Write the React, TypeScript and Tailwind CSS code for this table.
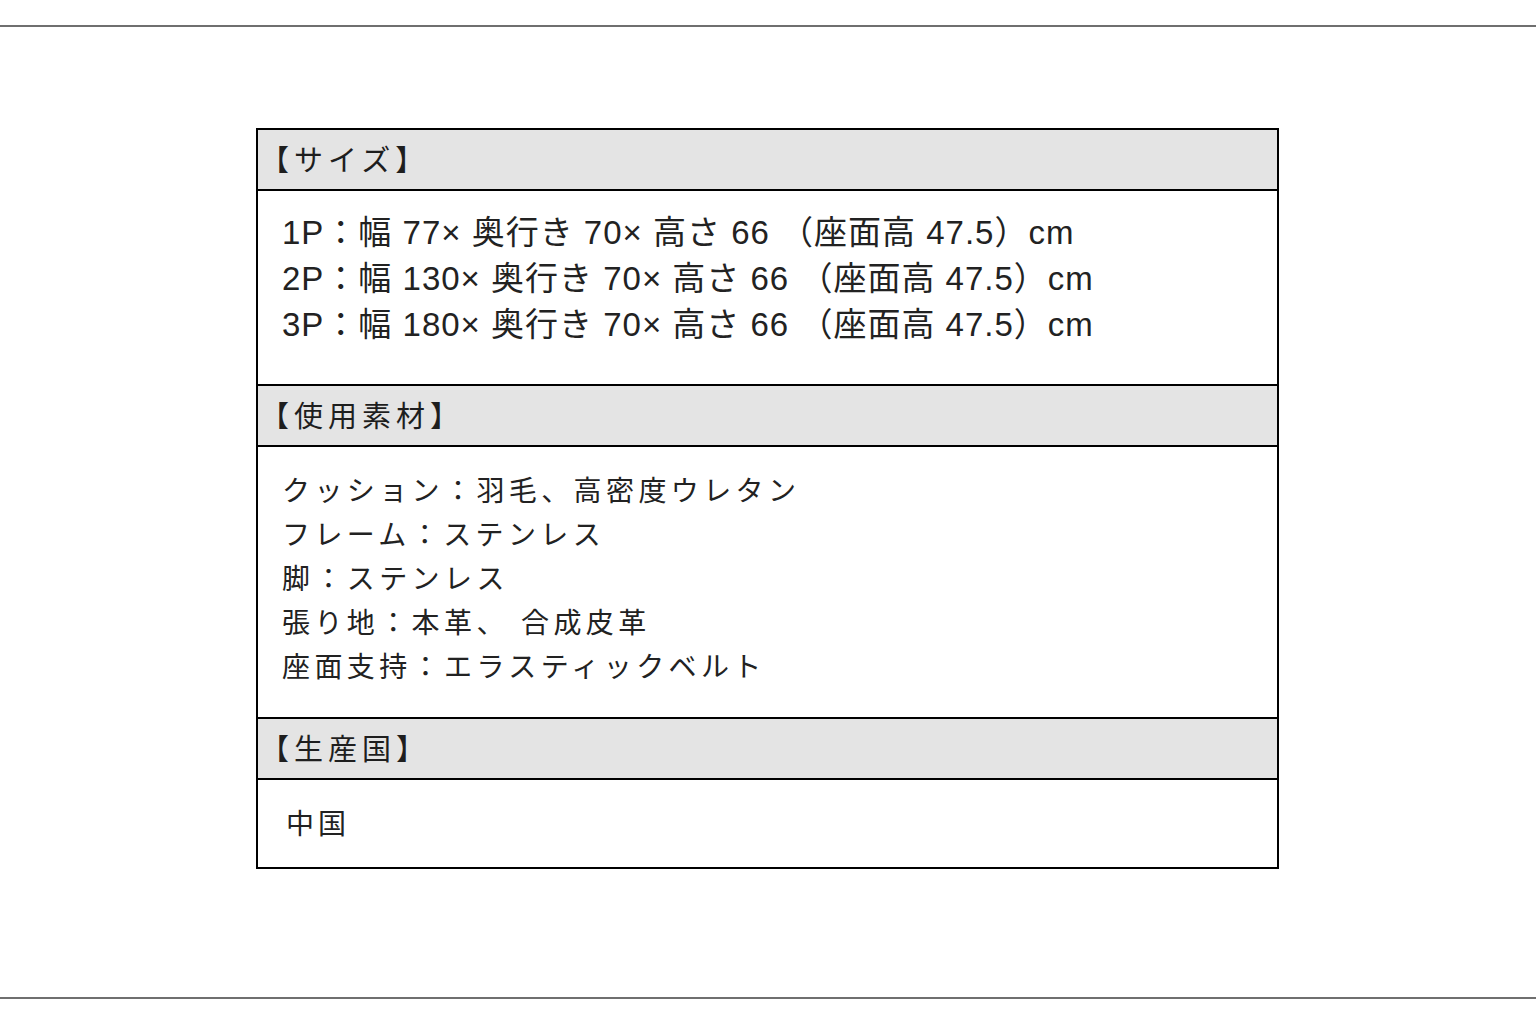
import React from "react";

const font = { fontFamily: '"Liberation Sans", "Noto Sans CJK JP", "Noto Sans", sans-serif' };

function Header({ children }: { children: React.ReactNode }) {
  return (
    <div className="h-[59px] bg-[#e4e4e4] flex items-center pt-[5px] pl-[2px] text-[29px] text-[#1e1e1e] tracking-[5px]">
      {children}
    </div>
  );
}

export default function App() {
  return (
    <div className="w-[1536px] h-[1024px] bg-white flex flex-col" style={font}>
      <div className="h-[25px]" />
      <div className="h-[2px] bg-[#6f6f6f]" />
      <div className="h-[101px]" />
      <div className="ml-[256px] w-[1023px] border-2 border-black flex flex-col">
        <Header>【サイズ】</Header>
        <div className="h-[195px] border-t-2 border-black pt-[19px] pl-[24px] text-[33px] leading-[46px] text-[#222] tracking-[1px]">
          <div>1P：幅 77× 奥行き 70× 高さ 66 （座面高 47.5）cm</div>
          <div>2P：幅 130× 奥行き 70× 高さ 66 （座面高 47.5）cm</div>
          <div>3P：幅 180× 奥行き 70× 高さ 66 （座面高 47.5）cm</div>
        </div>
        <div className="border-t-2 border-black">
          <Header>【使用素材】</Header>
        </div>
        <div className="h-[272px] border-t-2 border-black pt-[23px] pl-[24px] text-[28px] leading-[44px] text-[#222] tracking-[4.4px]">
          <div>クッション：羽毛、高密度ウレタン</div>
          <div>フレーム：ステンレス</div>
          <div>脚：ステンレス</div>
          <div>張り地：本革、 合成皮革</div>
          <div>座面支持：エラスティックベルト</div>
        </div>
        <div className="border-t-2 border-black">
          <Header>【生産国】</Header>
        </div>
        <div className="h-[89px] border-t-2 border-black pt-[23px] pl-[28px] text-[28px] leading-[44px] text-[#222] tracking-[4px]">
          <div>中国</div>
        </div>
      </div>
      <div className="flex-1" />
      <div className="h-[2px] bg-[#6f6f6f]" />
      <div className="h-[25px]" />
    </div>
  );
}
